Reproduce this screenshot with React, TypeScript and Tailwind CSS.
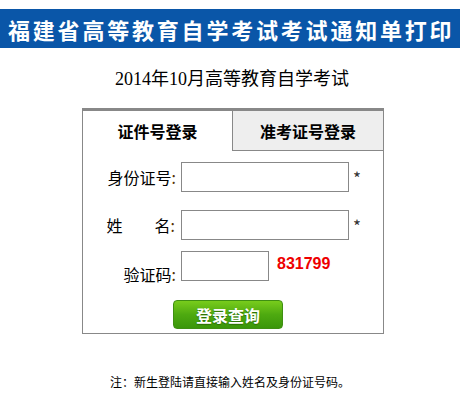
import React from "react";

const cjk = '"Noto Sans CJK SC", "Liberation Sans", sans-serif';

export default function App() {
  return (
    <div className="w-[462px] h-[399px] bg-white text-black" style={{ fontFamily: cjk }}>
      {/* Header */}
      <div className="pt-[9px]">
        <div className="h-[39px] w-[460px] bg-[#0a56a8] flex items-center pl-[8px]">
          <span className="text-[22px] font-bold text-white tracking-[2.8px] leading-none">
            福建省高等教育自学考试考试通知单打印
          </span>
        </div>
      </div>

      {/* Subtitle */}
      <div
        className="mt-[20px] text-center text-[18px] leading-[22px] pl-[2px]"
        style={{ fontFamily: '"Liberation Serif", "Noto Sans CJK SC", serif' }}
      >
        2014年10月高等教育自学考试
      </div>

      {/* Login box */}
      <div className="ml-[82px] mt-[18px] w-[302px] h-[226px] border border-[#888] border-t-[3px] flex flex-col">
        <div className="flex h-[40px]">
          <div className="w-[149px] flex items-center justify-center text-[16px] font-bold">
            证件号登录
          </div>
          <div className="flex-1 flex items-center justify-center bg-[#eeeeee] border-l border-b border-[#888] text-[16px] font-bold">
            准考证号登录
          </div>
        </div>

        <div className="flex flex-col pt-[11px]">
          <div className="flex items-center h-[30px]">
            <span className="w-[93px] text-right text-[16px] leading-none">身份证号<span className="text-[#553300]">:</span></span>
            <div className="ml-[5px] w-[168px] h-[30px] border border-[#888]" />
            <span className="ml-[4px] text-[17px] leading-none text-[#333]">*</span>
          </div>
          <div className="flex items-center h-[30px] mt-[18px]">
            <span className="w-[93px] text-right text-[16px] leading-none pr-[1px]">
              <span className="mr-[32px]">姓</span>名<span className="text-[#553300]">:</span>
            </span>
            <div className="ml-[5px] w-[168px] h-[30px] border border-[#888]" />
            <span className="ml-[4px] text-[17px] leading-none text-[#333]">*</span>
          </div>
          <div className="flex items-center h-[30px] mt-[11px]">
            <span className="w-[93px] text-right text-[16px] leading-none mt-[16px]">验证码<span className="text-[#553300]">:</span></span>
            <div className="ml-[5px] w-[88px] h-[30px] border border-[#888]" />
            <span
              className="ml-[8px] text-[16px] font-bold text-[#ee0000] -mt-[4px]"
              style={{ fontFamily: '"Liberation Sans", Arial, sans-serif' }}
            >
              831799
            </span>
          </div>
          <div className="ml-[90px] mt-[19px] w-[110px] h-[29px] rounded-[4px] border border-[#3f8f12] bg-gradient-to-b from-[#78cc1c] via-[#4eaa10] to-[#3a960a] flex items-center justify-center">
            <span className="text-white font-bold text-[16px] leading-none [text-shadow:0_1px_1px_#2a6a05]">
              登录查询
            </span>
          </div>
        </div>
      </div>

      {/* Note */}
      <div className="mt-[41px] text-center text-[12px] leading-[14px] pr-[2px]">
        注：新生登陆请直接输入姓名及身份证号码。
      </div>
    </div>
  );
}
